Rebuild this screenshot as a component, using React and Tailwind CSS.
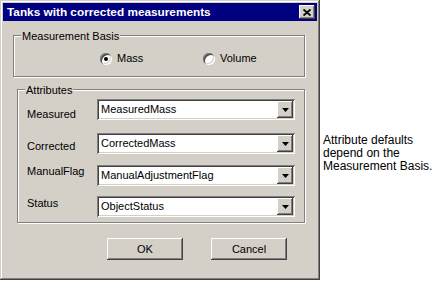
const raised =
  "shadow-[inset_-1px_-1px_0_#404040,inset_1px_1px_0_#fff,inset_-2px_-2px_0_#808080,inset_2px_2px_0_#d4d0c8]";
const sunken =
  "shadow-[inset_1px_1px_0_#808080,inset_-1px_-1px_0_#fff,inset_2px_2px_0_#404040,inset_-2px_-2px_0_#d4d0c8]";

function Combo({ value }) {
  return (
    <div className={`flex h-[21px] w-[198px] bg-white p-[2px] ${sunken}`}>
      <div className="flex flex-1 items-center pl-[2px] leading-[13px]">{value}</div>
      <div className={`flex w-[16px] items-center justify-center bg-[#d4d0c8] ${raised}`}>
        <svg width="7" height="4" viewBox="0 0 7 4">
          <polygon points="0,0 7,0 3.5,4" fill="#000" />
        </svg>
      </div>
    </div>
  );
}

function Radio({ checked, label, className = "" }) {
  return (
    <div className={`flex items-center ${className}`}>
      <div className={`flex h-[12px] w-[12px] items-center justify-center rounded-full bg-white ${sunken}`}>
        {checked ? <div className="h-[4px] w-[4px] rounded-full bg-black" /> : null}
      </div>
      <span className="ml-[5px] leading-[13px]">{label}</span>
    </div>
  );
}

function Group({ title, className = "", children }) {
  return (
    <div
      className={`flex flex-col border border-[#808080] shadow-[inset_1px_1px_0_#fff,1px_1px_0_#fff] ${className}`}
    >
      <div className="-mt-[6px] ml-[7px] w-fit bg-[#d4d0c8] px-[1px] leading-[13px]">{title}</div>
      {children}
    </div>
  );
}

const rows = [
  { label: "Measured", value: "MeasuredMass", mt: "mt-[2px]", pt: "pt-[9px]" },
  { label: "Corrected", value: "CorrectedMass", mt: "mt-[12px]", pt: "pt-[7px]" },
  { label: "ManualFlag", value: "ManualAdjustmentFlag", mt: "mt-[11px]", pt: "pt-0" },
  { label: "Status", value: "ObjectStatus", mt: "mt-[10px]", pt: "pt-[1px]" },
];

export default function App() {
  return (
    <div className="flex h-[281px] w-[440px] bg-white font-['Liberation_Sans',Arial,sans-serif] text-[11px] text-black">
      {/* dialog window */}
      <div
        className={`flex h-[280px] w-[320px] shrink-0 flex-col bg-[#d4d0c8] p-[3px] shadow-[inset_-1px_-1px_0_#404040,inset_1px_1px_0_#d4d0c8,inset_-2px_-2px_0_#808080,inset_2px_2px_0_#fff]`}
      >
        <div className="flex h-[18px] items-center bg-[#000080] pl-[4px] pr-[2px]">
          <span className="flex-1 text-[11.8px] font-bold leading-[14px] text-white">
            Tanks with corrected measurements
          </span>
          <div className={`flex h-[14px] w-[16px] items-center justify-center bg-[#d4d0c8] ${raised}`}>
            <svg width="8" height="7" viewBox="0 0 8 7">
              <path d="M0.5 0.5L7.5 6.5M7.5 0.5L0.5 6.5" stroke="#000" strokeWidth="1.8" />
            </svg>
          </div>
        </div>

        <Group title="Measurement Basis" className="ml-[10px] mt-[14px] h-[42px] w-[292px]">
          <div className="ml-[86px] mt-[9px] flex h-[13px]">
            <Radio checked label="Mass" className="w-[103px]" />
            <Radio label="Volume" />
          </div>
        </Group>

        <Group title="Attributes" className="ml-[14px] mt-[12px] h-[134px] w-[288px]">
          {rows.map((r) => (
            <div key={r.label} className={`flex items-start pl-[9px] ${r.mt}`}>
              <div className={`w-[70px] leading-[13px] ${r.pt}`}>{r.label}</div>
              <Combo value={r.value} />
            </div>
          ))}
        </Group>

        <div className="ml-[104px] mt-[15px] flex gap-[28px]">
          <button className={`h-[22px] w-[76px] bg-[#d4d0c8] leading-[13px] ${raised}`}>OK</button>
          <button className={`h-[22px] w-[76px] bg-[#d4d0c8] leading-[13px] ${raised}`}>Cancel</button>
        </div>
      </div>

      <div className="ml-[3px] mt-[134px] text-[12px] leading-[13px]">
        Attribute defaults
        <br />
        depend on the
        <br />
        Measurement Basis.
      </div>
    </div>
  );
}
